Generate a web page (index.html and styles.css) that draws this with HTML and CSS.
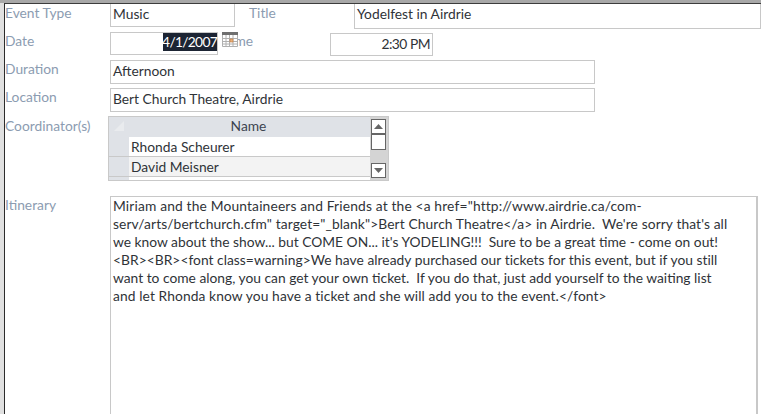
FILE: index.html
```html
<!DOCTYPE html>
<html lang="en">
<head>
<meta charset="utf-8">
<title>Event Details</title>
<link rel="stylesheet" href="styles.css">
</head>
<body>
<main class="form">
  <div class="row row-type">
    <span class="label">Event Type</span>
    <div class="box box-type">Music</div>
    <span class="label label-title">Title</span>
    <div class="box box-title">Yodelfest in Airdrie</div>
  </div>
  <div class="row row-date">
    <span class="label">Date</span>
    <div class="box box-date"><span class="selected">4/1/2007</span></div>
    <svg class="calendar" viewBox="0 0 16 15" width="16" height="15" aria-hidden="true">
      <rect x="0" y="0" width="16" height="15" fill="#fff"/>
      <rect x="0" y="0" width="16" height="3" fill="#6f6f6f"/>
      <path d="M.5 3v11.500h15V3M.5 6.500h15M.5 9.500h15M.5 12h15M4 3v11M7.500 3v11M11 3v11" fill="none" stroke="#b0b0b0"/>
      <rect x="8" y="7" width="3" height="3" fill="#e9b27c" stroke="#c0763a" stroke-width=".6"/>
    </svg>
    <span class="label label-time">Time</span>
    <div class="box box-time">2:30 PM</div>
  </div>
  <div class="row row-duration">
    <span class="label">Duration</span>
    <div class="box box-wide">Afternoon</div>
  </div>
  <div class="row row-location">
    <span class="label">Location</span>
    <div class="box box-wide">Bert Church Theatre, Airdrie</div>
  </div>
  <div class="row row-coordinators">
    <span class="label">Coordinator(s)</span>
    <div class="subform">
      <div class="selectors">
        <div class="corner"><svg viewBox="0 0 10 10" width="10" height="10" aria-hidden="true"><path d="M10 0v10H0z" fill="#e9ebee"/></svg></div>
        <div class="selector"></div>
        <div class="selector"></div>
      </div>
      <div class="names">
        <div class="name-head">Name</div>
        <div class="name">Rhonda Scheurer</div>
        <div class="name name-alt">David Meisner</div>
      </div>
      <div class="scrollbar">
        <div class="arrow"><svg viewBox="0 0 9 5" width="9" height="5" aria-hidden="true"><path d="M4.500 0 9 5H0z" fill="#666"/></svg></div>
        <div class="thumb"></div>
        <div class="track"></div>
        <div class="arrow"><svg viewBox="0 0 9 5" width="9" height="5" aria-hidden="true"><path d="M0 0h9L4.500 5z" fill="#666"/></svg></div>
      </div>
    </div>
  </div>
  <div class="row row-itinerary">
    <span class="label">Itinerary</span>
    <div class="memo">
      <div class="line line-a">Miriam and the Mountaineers and Friends at the &lt;a href="http://www.airdrie.ca/com-</div>
      <div class="line line-b">serv/arts/bertchurch.cfm" target="_blank"&gt;Bert Church Theatre&lt;/a&gt; in Airdrie.&nbsp; We're sorry that's all</div>
      <div class="line">we know about the show... but COME ON... it's YODELING!!!&nbsp; Sure to be a great time - come on out!</div>
      <div class="line line-d">&lt;BR&gt;&lt;BR&gt;&lt;font class=warning&gt;We have already purchased our tickets for this event, but if you still</div>
      <div class="line">want to come along, you can get your own ticket.&nbsp; If you do that, just add yourself to the waiting list</div>
      <div class="line line-f">and let Rhonda know you have a ticket and she will add you to the event.&lt;/font&gt;</div>
    </div>
  </div>
</main>
</body>
</html>
```
FILE: styles.css
```css
html, body {
  margin: 0;
  padding: 0;
  width: 761px;
  height: 414px;
  overflow: hidden;
}
body {
  box-sizing: border-box;
  padding: 3px 0 0 4px;
  background: linear-gradient(#a8a8a8 3px, #e0e0e0 3px);
}
.form {
  box-sizing: border-box;
  width: 757px;
  height: 411px;
  overflow: hidden;
  background: #fff;
  border-top: 1px solid #3c3c3c;
  border-left: 1px solid #2b2b2b;
  font-family: Lato, "Open Sans", sans-serif;
  font-size: 13.800px;
  color: #2f3338;
}
.row {
  display: flex;
  align-items: flex-start;
}
.row-type, .row-date, .row-duration { height: 28px; }
.row-location { height: 29px; }
.row-coordinators { height: 79px; }
.row-itinerary { height: 230px; }
.label {
  flex: none;
  width: 105px;
  color: #8c9cb1;
  line-height: 18px;
}
.label-title { margin-left: 14px; }
.label-time { width: 107px; }
.box {
  box-sizing: border-box;
  flex: none;
  border: 1px solid #c8c8c8;
  background: #fff;
  padding: 0 2px;
  line-height: 20px;
  white-space: nowrap;
}
.box-type { width: 125px; height: 23px; border-top: 0; }
.box-title { width: 407px; height: 25px; border-top: 0; }
.box-date {
  display: flex;
  justify-content: flex-end;
  width: 108px;
  height: 23px;
  padding: 0;
  line-height: 18px;
}
.selected {
  display: flex;
  justify-content: flex-end;
  width: 54px;
  height: 18px;
  background: #1c2433;
  color: #fff;
  letter-spacing: -.7px;
}
.calendar {
  flex: none;
  margin: 0 -15px 0 4px;
  position: relative;
  z-index: 1;
}
.box-time {
  width: 103px;
  height: 23px;
  margin-top: 1px;
  text-align: right;
  letter-spacing: -.5px;
}
.box-wide { width: 485px; height: 24px; }
.subform {
  box-sizing: border-box;
  display: flex;
  flex: none;
  width: 281px;
  height: 65px;
  margin: -1px 0 0 -2px;
  border: 1px solid #c9c9c9;
  background: #fff;
}
.selectors { width: 20px; flex: none; background: #dfe2e7; }
.corner { height: 20px; padding: 4px 0 0 5px; box-sizing: border-box; }
.corner svg { display: block; }
.selector { height: 20px; border-bottom: 1px solid #c9c9c9; box-sizing: border-box; }
.names { flex: 1; min-width: 0; overflow: hidden; }
.name-head {
  height: 20px;
  line-height: 18px;
  text-align: center;
  background: #dfe2e7;
  color: #3d4450;
  padding-right: 2px;
}
.name {
  box-sizing: border-box;
  height: 20px;
  line-height: 19px;
  padding-left: 2px;
  border-bottom: 1px solid #c9c9c9;
}
.name-alt { background: #f3f3f3; }
.scrollbar {
  box-sizing: border-box;
  display: flex;
  flex-direction: column;
  width: 18px;
  flex: none;
  padding: 2px 2px 2px 1px;
  background: #d4d4d4;
}
.arrow {
  box-sizing: border-box;
  display: flex;
  align-items: center;
  justify-content: center;
  height: 15px;
  background: #fff;
  border: 1px solid #666;
  flex: none;
}
.thumb {
  box-sizing: border-box;
  height: 16px;
  background: #fff;
  border: 1px solid #666;
  flex: none;
}
.track { flex: 1; }
.memo {
  box-sizing: border-box;
  width: 648px;
  height: 240px;
  flex: none;
  border: 1px solid #c8c8c8;
  border-right: 2px solid #c8c8c8;
  padding: 0 2px;
  line-height: 18px;
  white-space: nowrap;
}
.line-a { letter-spacing: .155px; }
.line-b { letter-spacing: .1px; }
.line-d { letter-spacing: .03px; }
.line-f { letter-spacing: .095px; }
```
